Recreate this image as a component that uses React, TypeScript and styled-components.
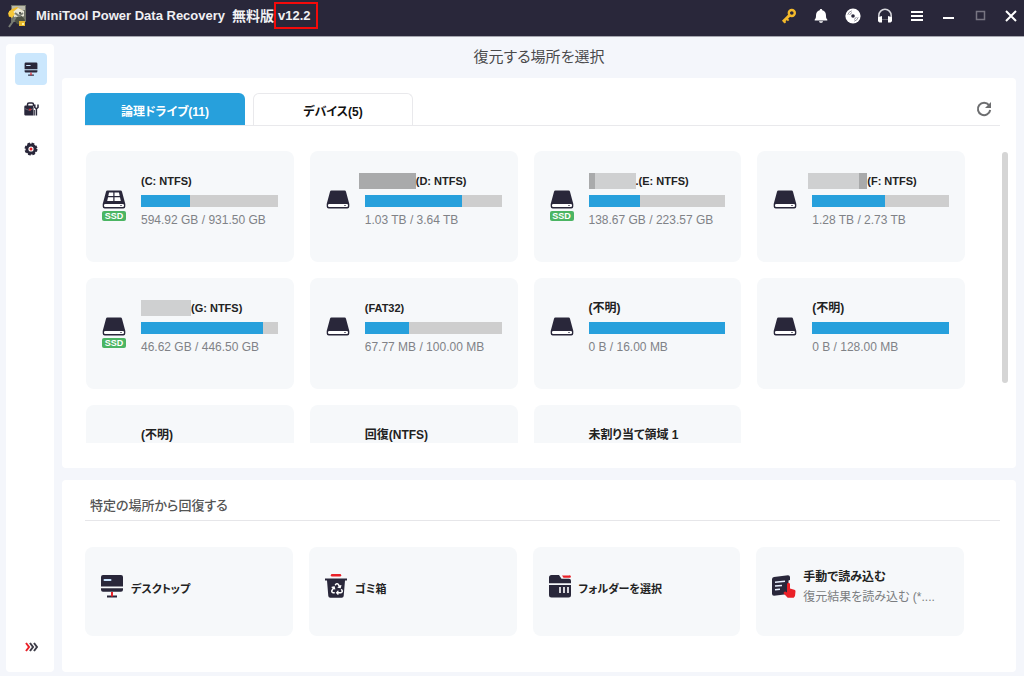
import React from "react";
import styled, { createGlobalStyle } from "styled-components";
import { FaRecycle } from "react-icons/fa";

const ink = "#29273a";
const blue = "#27a0dc";
const red = "#ea2128";

const GlobalStyle = createGlobalStyle`
  * { box-sizing: border-box; }
  body {
    margin: 0;
    background: #f4f6fb;
    color: #222;
    font-family: "Liberation Sans", "Noto Sans CJK JP", sans-serif;
    font-size: 12px;
    font-feature-settings: "palt";
  }
  button { font: inherit; font-feature-settings: inherit; color: inherit; border: 0; padding: 0; background: none; cursor: pointer; }
  h1, h2, p { margin: 0; }
  svg { display: block; flex: none; }
`;

const Shell = styled.div`
  display: flex;
  flex-direction: column;
  height: 100vh;
  min-height: 560px;
`;

const TitleBar = styled.header`
  display: flex;
  align-items: center;
  height: 37px;
  padding: 0 2px 5px 6px;
  background: ${ink};
  border-bottom: 1px solid #a5a6af;
  color: #f0f0f3;
`;

const AppName = styled.div`
  display: flex;
  align-items: center;
  flex: 1;
  margin-left: 6px;
  font-size: 13px;
  font-weight: 700;
  white-space: nowrap;
`;

const Edition = styled.span`
  margin-left: 7px;
  font-size: 14px;
  line-height: 20px;
`;

const Version = styled.span`
  height: 27px;
  padding: 0 5px 0 2px;
  border: 2px solid #f40a0a;
  line-height: 23px;
`;

const BarGroup = styled.div<{ $gap: number }>`
  display: flex;
  gap: ${(p) => p.$gap}px;
  margin-left: 10px;
`;

const BarButton = styled.button`
  display: grid;
  place-items: center;
  width: 22px;
  height: 22px;
`;

const Body = styled.div`
  display: flex;
  flex: 1;
  min-height: 0;
  gap: 8px;
  padding: 0 8px 4px 6px;
`;

const Sidebar = styled.nav`
  display: flex;
  flex-direction: column;
  align-items: center;
  gap: 8px;
  width: 48px;
  margin-top: 7px;
  padding: 9px 0 9px 2px;
  border-radius: 4px;
  background: #fff;
`;

const SideButton = styled.button<{ $active?: boolean; $last?: boolean }>`
  display: grid;
  place-items: center;
  width: 32px;
  height: 32px;
  margin-top: ${(p) => (p.$last ? "auto" : "0")};
  border-radius: 4px;
  background: ${(p) => (p.$active ? "#cbe7fd" : "transparent")};
`;

const Main = styled.main`
  display: flex;
  flex-direction: column;
  flex: 1;
  min-width: 0;
`;

const PageTitle = styled.h1`
  height: 41px;
  color: #4a4a4c;
  font-size: 15px;
  font-weight: 400;
  line-height: 40px;
  text-align: center;
`;

const Panel = styled.section<{ $fill?: boolean }>`
  display: flex;
  flex-direction: column;
  flex: ${(p) => (p.$fill ? "1 1 0" : "none")};
  min-height: 0;
  padding: ${(p) => (p.$fill ? "15px 8px 25px 24px" : "11px 16px 36px 23px")};
  border-radius: 4px;
  background: #fff;

  & + & { margin-top: 12px; }
`;

const TabRow = styled.div`
  display: flex;
  align-items: flex-end;
  gap: 8px;
  margin: 0 8px 0 -1px;
  border-bottom: 1px solid #e9e9ec;
`;

const Tab = styled.button<{ $active?: boolean }>`
  width: 160px;
  height: 32px;
  border: ${(p) => (p.$active ? "0" : "1px solid #e9e9ec")};
  border-bottom: 0;
  border-radius: 6px 6px 0 0;
  background: ${(p) => (p.$active ? blue : "#fff")};
  color: ${(p) => (p.$active ? "#fff" : "#111")};
  font-weight: 700;
  padding-top: 2px;
`;

const Refresh = styled.button`
  align-self: center;
  margin-left: auto;
  margin-right: 8px;
`;

const ScrollArea = styled.div`
  display: flex;
  flex: 1;
  min-height: 0;
  gap: 37px;
  margin-top: 25px;
`;

const DriveGrid = styled.div`
  display: grid;
  flex: 1;
  grid-template-columns: repeat(4, 1fr);
  grid-auto-rows: 111px;
  gap: 16px;
  overflow: hidden;
`;

const Thumb = styled.div`
  width: 6px;
  height: 79%;
  margin-top: 1px;
  border-radius: 3px;
  background: #d5d5d5;
`;

const DriveCard = styled.button`
  display: flex;
  align-items: flex-start;
  gap: 15px;
  min-width: 0;
  padding: 22px 16px 0;
  border-radius: 8px;
  background: #f6f8fa;
  text-align: left;
`;

const DriveArt = styled.span`
  display: flex;
  flex-direction: column;
  gap: 2px;
  width: 24px;
  padding-top: 17px;
`;

const SsdBadge = styled.span`
  height: 10px;
  border-radius: 2px;
  background: #4bb563;
  color: #fff;
  font-size: 9px;
  font-weight: 700;
  line-height: 10px;
  text-align: center;
`;

const DriveInfo = styled.span`
  display: flex;
  flex-direction: column;
  gap: 6px;
  flex: 1;
  min-width: 0;
`;

const DriveName = styled.span<{ $latin: boolean }>`
  display: flex;
  height: 16px;
  font-size: ${(p) => (p.$latin ? 11 : 12)}px;
  font-weight: 700;
  line-height: 16px;
  white-space: nowrap;
`;

const Mask = styled.span<{ $outset: number }>`
  display: flex;
  height: 16px;
  margin-left: -${(p) => p.$outset}px;
`;

const MaskPart = styled.span<{ $width: number; $dark?: boolean }>`
  width: ${(p) => p.$width}px;
  background: ${(p) => (p.$dark ? "#a9aaab" : "#cfd0d1")};
`;

const Usage = styled.span`
  display: block;
  height: 12px;
  background: #cecece;
`;

const UsageFill = styled.span`
  display: block;
  height: 100%;
  background: ${blue};
`;

const Size = styled.span`
  color: #808287;
  font-size: 12px;
  line-height: 14px;
  white-space: nowrap;
`;

const SectionTitle = styled.h2`
  height: 30px;
  padding-left: 5px;
  border-bottom: 1px solid #e6e6e9;
  color: #555;
  font-size: 13px;
  font-weight: 500;
  line-height: 30px;
`;

const PlaceGrid = styled.div`
  display: grid;
  grid-template-columns: repeat(4, 1fr);
  gap: 16px;
  margin: 26px 36px 0 0;
`;

const PlaceCard = styled.button`
  display: flex;
  align-items: center;
  gap: 7px;
  min-width: 0;
  height: 89px;
  padding: 0 16px 11px 15px;
  border-radius: 8px;
  background: #f6f8fa;
  text-align: left;
`;

const PlaceText = styled.span<{ $noted: boolean }>`
  display: flex;
  flex-direction: column;
  gap: 4px;
  min-width: 0;
  padding-top: ${(p) => (p.$noted ? 2 : 6)}px;
  font-size: ${(p) => (p.$noted ? 12 : 11)}px;
  line-height: 16px;
  white-space: nowrap;
`;

const PlaceName = styled.span`
  font-weight: 700;
`;

const PlaceNote = styled.span`
  color: #7b7d80;
`;

const Logo = () => (
  <svg width="24" height="24" viewBox="0 0 24 24">
    <rect x="5" y="1" width="15" height="17" fill="#6f7268" />
    <path d="M6 2h13v4H6z" fill="#b9b9aa" />
    <path d="M2 9l4-4 5-2 5 3 2 5-5 2-5-3-5 3z" fill="#f2bd2c" />
    <path d="M7 8l5-4 6 3v5l-5 3-5-2z" fill="#e9e8d8" />
    <path d="M3 7l3-1 3 4-3 4-3-2z" fill="#f7c93a" />
    <path d="M10 13l6-1 3 4-2 5-6-1-3-4z" fill="#4d5145" />
    <path d="M13 17h6v5h-6z" fill="#e7b82d" />
    <path d="M10 13l-7 10M9 9l4 3 4-3" stroke="#797d74" strokeWidth="2" fill="none" />
    <circle cx="14" cy="9" r="1" fill="#33352f" />
    <path d="M16 19h2v2h-2z" fill="#fff2a0" />
  </svg>
);

const KeyIcon = () => (
  <svg width="16" height="16" viewBox="0 0 16 16" fill="none" stroke="#f3b92b">
    <circle cx="10.800" cy="5" r="3" strokeWidth="2.400" />
    <path d="M8.600 7.200L2 13.800" strokeWidth="3" />
    <path d="M5.600 10.600l2 2M2.500 12.800l2 2" strokeWidth="2" />
  </svg>
);

const BellIcon = () => (
  <svg width="16" height="16" viewBox="0 0 16 16" fill="#fff">
    <path d="M8 1c.8 0 1.200.5 1.300 1.200C12 3 13 5 13 7.500c0 2.500.3 3 1.300 3.900V12.500H1.700V11.400C2.700 10.500 3 10 3 7.500 3 5 4 3 6.700 2.200 6.800 1.500 7.200 1 8 1z" />
    <path d="M6 13.300h4c-.2 1-1 1.500-2 1.500s-1.800-.5-2-1.500z" />
  </svg>
);

const DiscIcon = () => (
  <svg width="16" height="16" viewBox="0 0 16 16">
    <circle cx="8" cy="8" r="7.600" fill="#fff" />
    <circle cx="8" cy="8" r="1.800" fill={ink} />
    <path d="M2.800 6.800A5.500 5.500 0 0 1 6.800 2.800M4.600 7A4 4 0 0 1 7 4.600M13.200 9.200a5.500 5.500 0 0 1-4 4M11.400 9A4 4 0 0 1 9 11.400" stroke="#777684" strokeWidth=".8" fill="none" />
  </svg>
);

const HeadsetIcon = () => (
  <svg width="16" height="16" viewBox="0 0 16 16" fill="none">
    <path d="M1.800 10V7.500a6.200 6.200 0 0 1 12.400 0V10" stroke="#d8d8dd" strokeWidth="1.500" />
    <path d="M1 9.200L5 8v6.500H2.500L1 13.200zM15 9.200L11 8v6.500h2.500L15 13.200z" fill="#fff" />
    <path d="M5 11.500h6" stroke="#65646f" />
  </svg>
);

const MenuIcon = () => (
  <svg width="12" height="12" viewBox="0 0 12 12" stroke="#fff" strokeWidth="2">
    <path d="M0 2h12M0 6h12M0 10h12" />
  </svg>
);

const MinimizeIcon = () => (
  <svg width="12" height="12" viewBox="0 0 12 12">
    <path d="M0 7h11v2H0z" fill="#fff" />
  </svg>
);

const MaximizeIcon = () => (
  <svg width="11" height="11" viewBox="0 0 11 11">
    <path d="M1.500 1.500h8v8h-8z" fill="none" stroke="#777582" strokeWidth="1.500" />
  </svg>
);

const CloseIcon = () => (
  <svg width="12" height="12" viewBox="0 0 12 12">
    <path d="M1 1l10 10M11 1L1 11" stroke="#fff" strokeWidth="2" />
  </svg>
);

const MonitorIcon = ({ size = 24 }: { size?: number }) => (
  <svg width={size} height={size} viewBox="0 0 24 24">
    <path d="M3 1h18a2 2 0 0 1 2 2v9.500H1V3a2 2 0 0 1 2-2zM1 14.300h22v1.500a2 2 0 0 1-2 2H3a2 2 0 0 1-2-2z" fill={ink} />
    <path d="M4.500 6h6" stroke="#cbe5ff" strokeWidth="2" strokeLinecap="round" />
    <path d="M7 21.500h10v2H7z" fill={ink} />
    <path d="M11 18h2v4.500h-2z" fill={red} />
  </svg>
);

const ToolboxIcon = () => (
  <svg width="15" height="15" viewBox="0 0 15 15">
    <path d="M3.500 4V2.500A1.500 1.500 0 0 1 5 1h3a1.500 1.500 0 0 1 1.500 1.500V4" fill="none" stroke={ink} strokeWidth="1.500" />
    <path d="M1.500 3.500h8V13.500h-8A1.200 1.200 0 0 1 .3 12.500V4.700a1.200 1.200 0 0 1 1.200-1.200z" fill={ink} />
    <path d="M.5 6.500l5 2 4-2" fill="none" stroke="#777583" strokeWidth=".8" />
    <path d="M4.500 6.800h3L6 9z" fill={red} />
    <path d="M10.800 2.500v3l1.600 1.300 1.600-1.300v-3M12.400 6.500v7" fill="none" stroke={ink} strokeWidth="1.500" />
    <path d="M10.300 8v5.500" stroke={ink} />
  </svg>
);

const GearIcon = () => (
  <svg width="14" height="14" viewBox="0 0 14 14">
    <circle cx="7" cy="7" r="5.500" fill={ink} />
    <circle cx="7" cy="7" r="5.400" fill="none" stroke={ink} strokeWidth="2.200" strokeDasharray="2.600 1.641" />
    <circle cx="7" cy="7" r="2.600" fill="#fff" />
    <circle cx="7" cy="7" r="1.500" fill={red} />
  </svg>
);

const ExpandIcon = () => (
  <svg width="13" height="10" viewBox="0 0 13 10" fill="none" strokeWidth="2">
    <path d="M1 1l3 4-3 4" stroke={red} />
    <path d="M5 1l3 4-3 4M9 1l3 4-3 4" stroke="#3d3c48" />
  </svg>
);

const RefreshIcon = () => (
  <svg width="16" height="16" viewBox="0 0 16 16">
    <path d="M13 4.200A6.200 6.200 0 1 0 14.200 9" fill="none" stroke="#6d6e70" strokeWidth="2" />
    <path d="M15 1v6H9z" fill="#6d6e70" />
  </svg>
);

const DriveIcon = ({ windows }: { windows?: boolean }) => (
  <svg width="24" height="19" viewBox="0 0 24 19">
    <path d="M5.500.5h13a1.500 1.500 0 0 1 1.500 1.200L23.300 14v2.500a2 2 0 0 1-2 2H2.700a2 2 0 0 1-2-2V14L4 1.700A1.500 1.500 0 0 1 5.500.5z" fill={ink} />
    <rect x="2" y="14" width="20" height="3" rx="1.300" fill="#fff" />
    <path d="M18 15.500h2" stroke="#777583" />
    {windows && (
      <path d="M7 2.500h4.300V6H6.300zM12.500 2.500H17l.7 3.500h-5.200zM6 7.200h5.300V11H5.200zM12.500 7.200H18l.8 3.800h-6.300z" fill="#fff" />
    )}
  </svg>
);

const BinIcon = () => (
  <svg width="24" height="24" viewBox="0 0 24 24">
    <path d="M8 0h8a1 1 0 0 1 0 2.400H8A1 1 0 0 1 8 0z" fill={red} />
    <path d="M1 4.500h22v2h-2L19.700 22a2 2 0 0 1-2 1.800H6.300a2 2 0 0 1-2-1.800L3 6.500H1z" fill={ink} />
    <FaRecycle x={7} y={9} width={10} height={10} color="#fff" />
  </svg>
);

const FolderIcon = () => (
  <svg width="24" height="24" viewBox="0 0 24 24">
    <path d="M3.500 1H11l2.500 3.700H21a2 2 0 0 1 2 2v2.600H1V3.500A2.500 2.500 0 0 1 3.500 1z" fill={ink} />
    <path d="M14 1.500h7a1.200 1.200 0 0 1 1.200 2.300H15.500z" fill={red} />
    <path d="M1 11h22v10a2.500 2.500 0 0 1-2.500 2.500h-17A2.500 2.500 0 0 1 1 21z" fill={ink} />
    <path d="M12 13v6M16 13v6M20 13v6" stroke="#fff" strokeWidth="1.600" />
  </svg>
);

const ManualIcon = () => (
  <svg width="25" height="24" viewBox="0 0 25 24">
    <path d="M3 3l14-1.800a2 2 0 0 1 2 1.800v3l-1.500.5V20L3 21.800a2 2 0 0 1-2-2V5.200A2.200 2.200 0 0 1 3 3z" fill={ink} />
    <path d="M4 8.200l10-1M4 12l7-.6M4 15.700l5-.4" stroke="#e8f1ff" strokeWidth="1.500" />
    <path d="M16 10.300a1.500 1.500 0 0 1 3 0v4.200l4.300 1.300a1.500 1.500 0 0 1 1.200 1.600l-.5 4.600-1.300 1.800h-6l-4-4.200a1.500 1.500 0 0 1 2.200-1.800l1.100.8z" fill={red} />
  </svg>
);

type Drive = {
  name: string;
  size?: string;
  used?: number;
  ssd?: boolean;
  windows?: boolean;
  outset?: number;
  mask?: { width: number; dark?: boolean }[];
};

const drives: Drive[] = [
  { name: "(C: NTFS)", size: "594.92 GB / 931.50 GB", used: 36, ssd: true, windows: true },
  { name: "(D: NTFS)", size: "1.03 TB / 3.64 TB", used: 71, outset: 6, mask: [{ width: 57, dark: true }] },
  { name: ".(E: NTFS)", size: "138.67 GB / 223.57 GB", used: 38, ssd: true, mask: [{ width: 6, dark: true }, { width: 41 }] },
  { name: "(F: NTFS)", size: "1.28 TB / 2.73 TB", used: 53, outset: 4, mask: [{ width: 51 }, { width: 8, dark: true }] },
  { name: "(G: NTFS)", size: "46.62 GB / 446.50 GB", used: 89, ssd: true, mask: [{ width: 50 }] },
  { name: "(FAT32)", size: "67.77 MB / 100.00 MB", used: 32 },
  { name: "(不明)", size: "0 B / 16.00 MB", used: 100 },
  { name: "(不明)", size: "0 B / 128.00 MB", used: 100 },
  { name: "(不明)" },
  { name: "回復(NTFS)" },
  { name: "未割り当て領域 1" },
];

const places = [
  { name: "デスクトップ", icon: <MonitorIcon /> },
  { name: "ゴミ箱", icon: <BinIcon /> },
  { name: "フォルダーを選択", icon: <FolderIcon /> },
  { name: "手動で読み込む", note: "復元結果を読み込む (*....", icon: <ManualIcon /> },
];

const DriveItem = ({ drive }: { drive: Drive }) => (
  <DriveCard type="button">
    <DriveArt>
      {drive.size && <DriveIcon windows={drive.windows} />}
      {drive.ssd && <SsdBadge>SSD</SsdBadge>}
    </DriveArt>
    <DriveInfo>
      <DriveName $latin={/^[\x20-\x7e]+$/.test(drive.name)}>
        {drive.mask && (
          <Mask $outset={drive.outset ?? 0}>
            {drive.mask.map((part, i) => (
              <MaskPart key={i} $width={part.width} $dark={part.dark} />
            ))}
          </Mask>
        )}
        {drive.name}
      </DriveName>
      {drive.size && (
        <>
          <Usage>
            <UsageFill style={{ width: `${drive.used}%` }} />
          </Usage>
          <Size>{drive.size}</Size>
        </>
      )}
    </DriveInfo>
  </DriveCard>
);

export default function App() {
  return (
    <Shell lang="ja">
      <GlobalStyle />
      <TitleBar>
        <Logo />
        <AppName>
          MiniTool Power Data Recovery
          <Edition>無料版</Edition>
          <Version>v12.2</Version>
        </AppName>
        <BarGroup $gap={10}>
          <BarButton aria-label="登録"><KeyIcon /></BarButton>
          <BarButton aria-label="通知"><BellIcon /></BarButton>
          <BarButton aria-label="ブータブルメディア"><DiscIcon /></BarButton>
          <BarButton aria-label="サポート"><HeadsetIcon /></BarButton>
          <BarButton aria-label="メニュー"><MenuIcon /></BarButton>
        </BarGroup>
        <BarGroup $gap={9}>
          <BarButton aria-label="最小化"><MinimizeIcon /></BarButton>
          <BarButton aria-label="最大化"><MaximizeIcon /></BarButton>
          <BarButton aria-label="閉じる"><CloseIcon /></BarButton>
        </BarGroup>
      </TitleBar>
      <Body>
        <Sidebar>
          <SideButton $active aria-label="データ復元"><MonitorIcon size={14} /></SideButton>
          <SideButton aria-label="ツール"><ToolboxIcon /></SideButton>
          <SideButton aria-label="設定"><GearIcon /></SideButton>
          <SideButton $last aria-label="展開"><ExpandIcon /></SideButton>
        </Sidebar>
        <Main>
          <PageTitle>復元する場所を選択</PageTitle>
          <Panel $fill>
            <TabRow>
              <Tab type="button" $active>論理ドライブ(11)</Tab>
              <Tab type="button">デバイス(5)</Tab>
              <Refresh type="button" aria-label="更新"><RefreshIcon /></Refresh>
            </TabRow>
            <ScrollArea>
              <DriveGrid>
                {drives.map((drive, i) => (
                  <DriveItem key={i} drive={drive} />
                ))}
              </DriveGrid>
              <Thumb />
            </ScrollArea>
          </Panel>
          <Panel>
            <SectionTitle>特定の場所から回復する</SectionTitle>
            <PlaceGrid>
              {places.map((place) => (
                <PlaceCard type="button" key={place.name}>
                  {place.icon}
                  <PlaceText $noted={Boolean(place.note)}>
                    <PlaceName>{place.name}</PlaceName>
                    {place.note && <PlaceNote>{place.note}</PlaceNote>}
                  </PlaceText>
                </PlaceCard>
              ))}
            </PlaceGrid>
          </Panel>
        </Main>
      </Body>
    </Shell>
  );
}
